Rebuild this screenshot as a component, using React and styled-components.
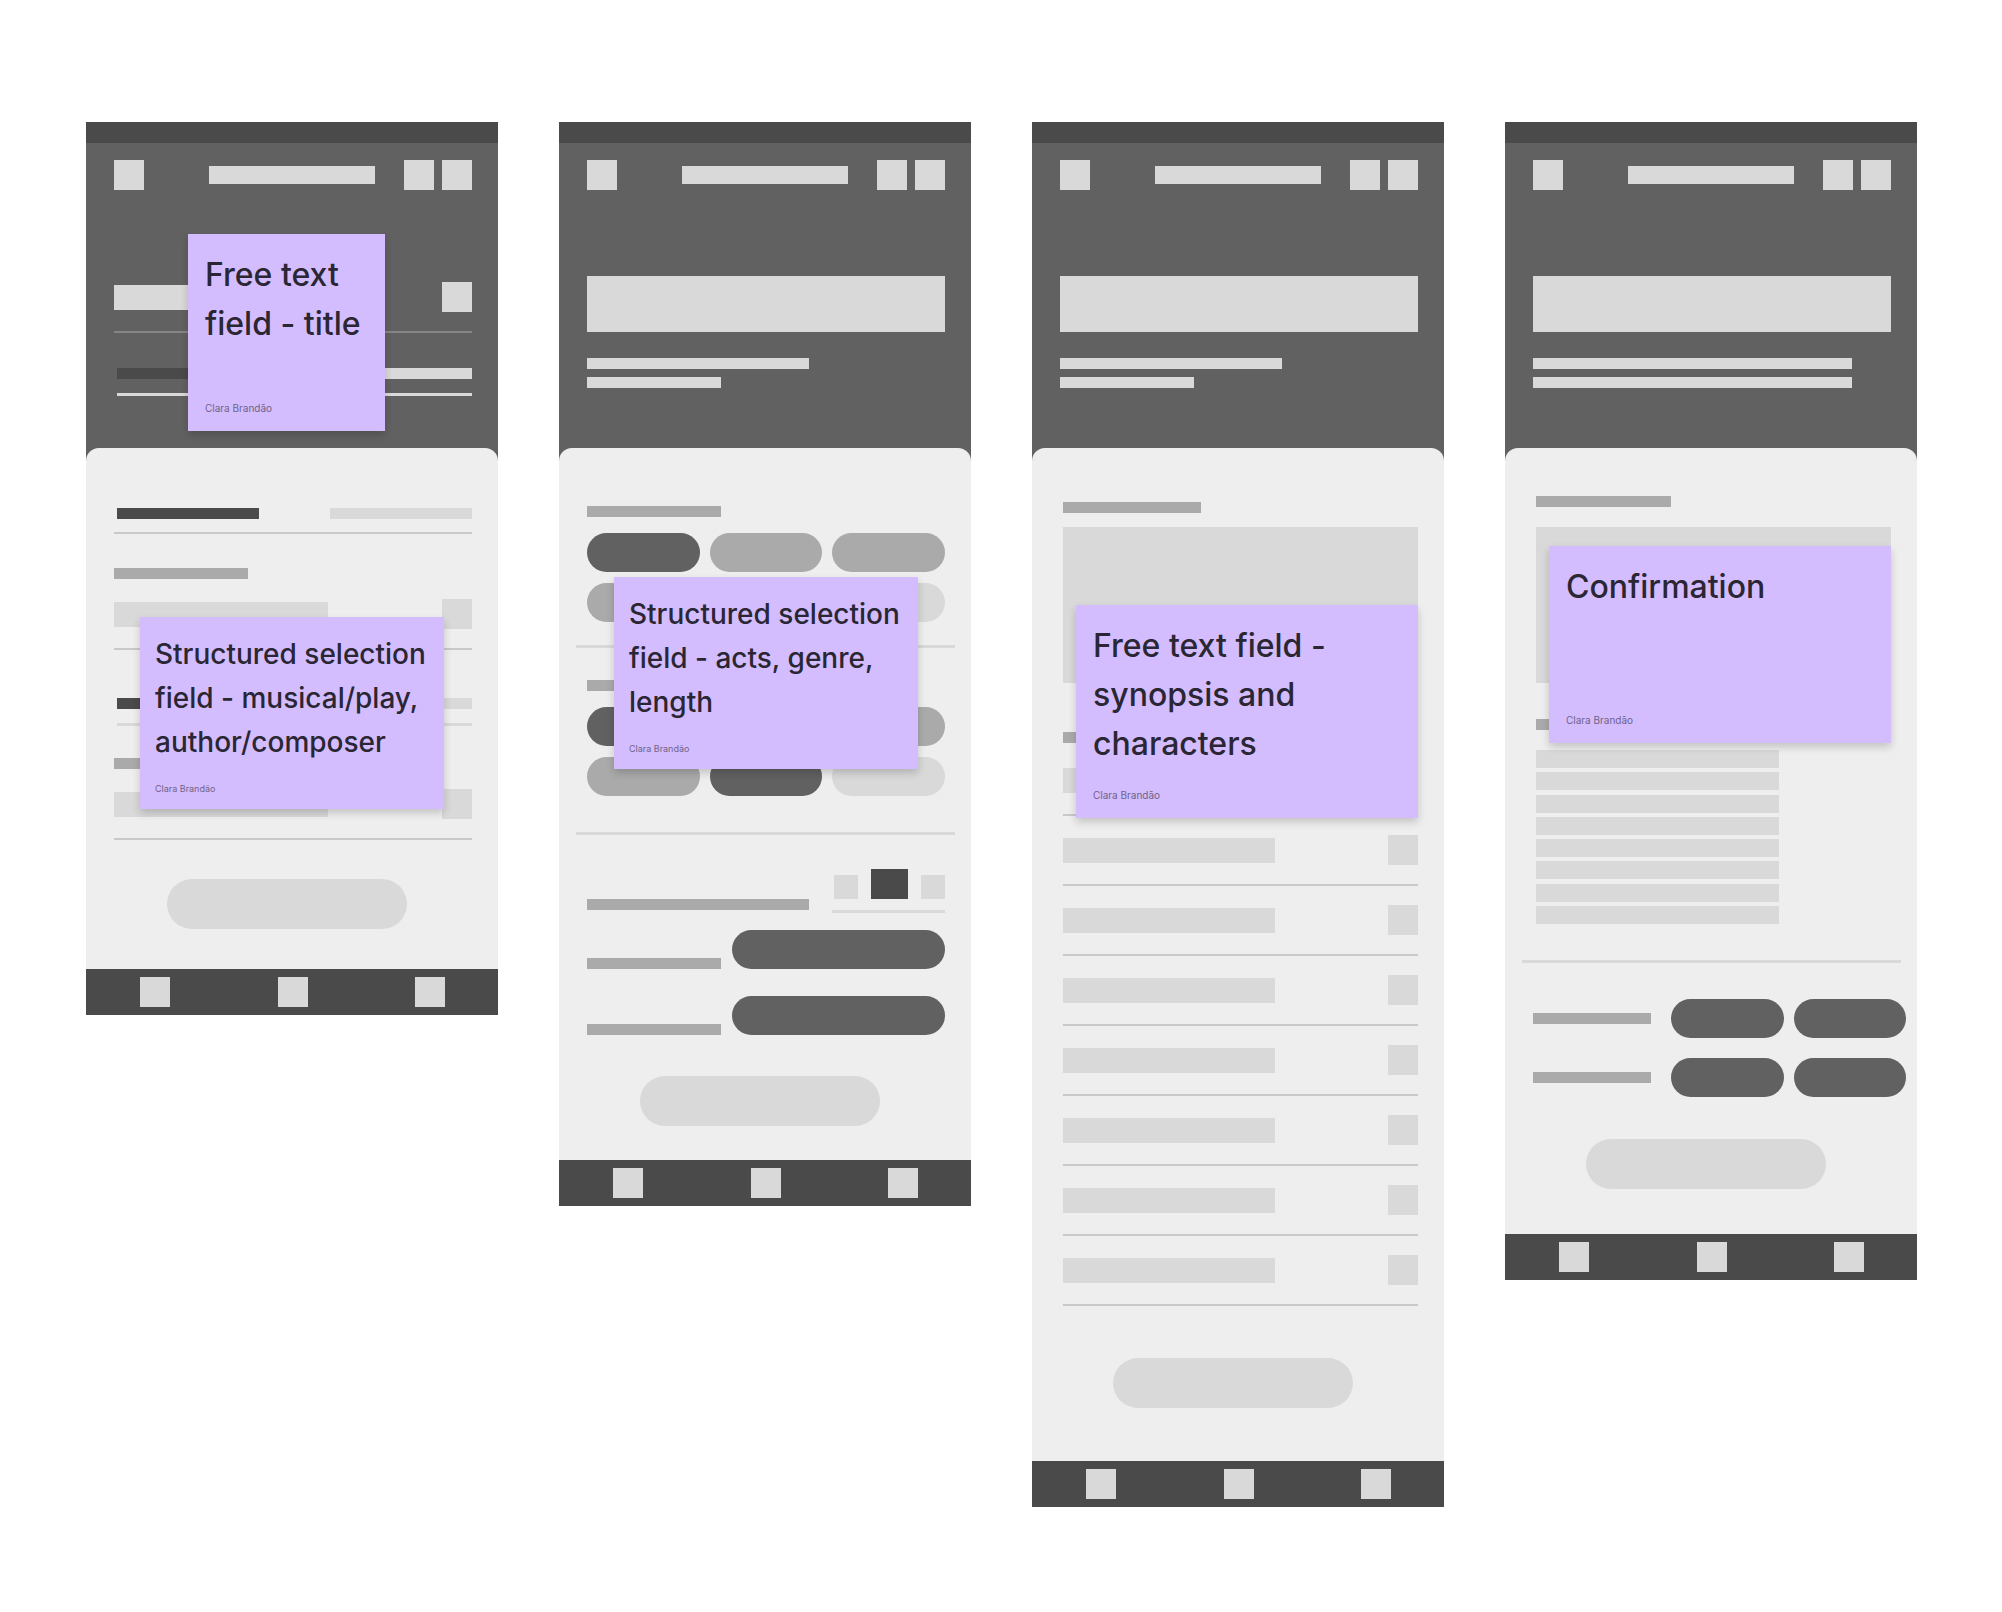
import styled, { createGlobalStyle } from "styled-components";

const colors = {
  ink: "#4a4a4a",
  header: "#616161",
  mid: "#aaaaaa",
  light: "#d9d9d9",
  sheet: "#eeeeee",
  rule: "#c9c9c9",
  headerRule: "#858585",
  note: "#d3bdff",
};

const characters = [1, 2, 3, 4, 5, 6, 7, 8];
const summaryLines = [1, 2, 3, 4, 5, 6, 7, 8];

const Note = ({ size, children, ...place }) => (
  <Sticky $large={size === "large"} {...place}>
    <NoteText $large={size === "large"}>{children}</NoteText>
    <NoteAuthor $large={size === "large"}>Clara Brandão</NoteAuthor>
  </Sticky>
);

const Field = ({ label, width = 214, top, line }) => (
  <FieldRow $top={top} $line={line}>
    <FieldInput aria-label={label} $width={width} />
    <SquareButton type="button" aria-label={`Edit ${label}`} />
  </FieldRow>
);

const TabPair = ({ top, inset, thick, header }) => (
  <Tabs $top={top} $inset={inset} $thick={thick}>
    <Bar $width={142} $color={colors.ink} />
    <Bar $width={142} $color={header ? colors.light : undefined} />
  </Tabs>
);

const PillRow = ({ tones, top, name }) => (
  <Pills $top={top}>
    {tones.map((tone, i) => (
      <Pill key={i} type="button" aria-label={`${name} ${i + 1}`} $color={colors[tone]} />
    ))}
  </Pills>
);

const Hero = ({ lines }) => (
  <HeroArea>
    <HeroTitle />
    {lines.map((width, i) => (
      <Bar key={i} $width={width} $top={i === 0 ? 26 : 8} />
    ))}
  </HeroArea>
);

const Phone = ({ header, notes, submit, children }) => (
  <Screen>
    <StatusBar />
    <TopBar>
      <SquareButton type="button" aria-label="Back" />
      <TopTitle />
      <TopActions>
        <SquareButton type="button" aria-label="Search" />
        <SquareButton type="button" aria-label="Menu" />
      </TopActions>
    </TopBar>
    {header}
    <Sheet>
      {children}
      <Actions $top={submit.top} $bottom={submit.bottom}>
        <SubmitButton type="button" aria-label="Continue" />
      </Actions>
    </Sheet>
    <BottomNav>
      <SquareButton type="button" aria-label="Home" />
      <SquareButton type="button" aria-label="Library" />
      <SquareButton type="button" aria-label="Profile" />
    </BottomNav>
    {notes}
  </Screen>
);

const TitleScreen = () => (
  <Phone
    submit={{ top: 39, bottom: 40 }}
    header={
      <TitleArea>
        <Field label="title" line={colors.headerRule} />
        <TabPair top={35} inset thick header />
      </TitleArea>
    }
    notes={
      <>
        <Note size="large" $left={102} $top={112} $width={197} $height={197}>
          Free text field - title
        </Note>
        <Note $left={54} $top={495} $width={304} $height={192}>
          Structured selection field - musical/play, author/composer
        </Note>
      </>
    }
  >
    <Section>
      <TabPair top={60} />
      <Bar $width={134} $color={colors.mid} $top={34} />
      <Field label="author" top={20} />
      <TabPair top={48} inset thick />
      <Bar $width={134} $color={colors.mid} $top={32} />
      <Field label="composer" top={20} />
    </Section>
  </Phone>
);

const SelectionScreen = () => (
  <Phone
    submit={{ top: 41, bottom: 34 }}
    header={<Hero lines={[222, 134]} />}
    notes={
      <Note $left={55} $top={455} $width={304} $height={192}>
        Structured selection field - acts, genre, length
      </Note>
    }
  >
    <Section>
      <Bar $width={134} $color={colors.mid} $top={58} />
      <PillRow name="Acts" top={16} tones={["header", "mid", "mid"]} />
      <PillRow name="More acts" top={11} tones={["mid", "mid", "light"]} />
    </Section>
    <Divider $top={23} />
    <Section>
      <Bar $width={134} $color={colors.mid} $top={32} />
      <PillRow name="Genre" top={16} tones={["header", "mid", "mid"]} />
      <PillRow name="More genres" top={11} tones={["mid", "header", "light"]} />
    </Section>
    <Divider $top={36} />
    <Section>
      <CounterRow $top={34}>
        <Bar $width={222} $color={colors.mid} />
        <Counter>
          <CounterStep type="button" aria-label="Fewer" />
          <CounterValue />
          <CounterStep type="button" aria-label="More" />
        </Counter>
      </CounterRow>
      <OptionRow $top={17}>
        <Bar $width={134} $color={colors.mid} />
        <Pill type="button" aria-label="Shortest" $color={colors.header} />
      </OptionRow>
      <OptionRow $top={27}>
        <Bar $width={134} $color={colors.mid} />
        <Pill type="button" aria-label="Longest" $color={colors.header} />
      </OptionRow>
    </Section>
  </Phone>
);

const SynopsisScreen = () => (
  <Phone
    submit={{ top: 52, bottom: 53 }}
    header={<Hero lines={[222, 134]} />}
    notes={
      <Note size="large" $left={44} $top={483} $width={342} $height={213}>
        Free text field - synopsis and characters
      </Note>
    }
  >
    <Section $left={31}>
      <Bar $width={138} $color={colors.mid} $top={54} />
      <TextBox aria-label="Synopsis" $top={14} />
      <Bar $width={138} $color={colors.mid} $top={49} />
      {characters.map((n) => (
        <Field key={n} label={`character ${n}`} width={212} top={n === 1 ? 22 : 19} />
      ))}
    </Section>
  </Phone>
);

const ConfirmationScreen = () => (
  <Phone
    submit={{ top: 42, bottom: 45 }}
    header={<Hero lines={[319, 319]} />}
    notes={
      <Note size="large" $left={44} $top={424} $width={342} $height={197}>
        Confirmation
      </Note>
    }
  >
    <Section $left={31}>
      <Bar $width={135} $color={colors.mid} $top={48} />
      <TextBox aria-label="Summary" $top={20} />
      <Bar $width={135} $color={colors.mid} $top={36} />
      <Summary>
        {summaryLines.map((n) => (
          <SummaryLine key={n} />
        ))}
      </Summary>
    </Section>
    <Divider $top={36} />
    <Section $right={11}>
      {[36, 20].map((top, i) => (
        <ConfirmRow key={i} $top={top}>
          <Bar $width={118} $color={colors.mid} />
          <PillRow name={`Choice ${i + 1}`} tones={["header", "header"]} />
        </ConfirmRow>
      ))}
    </Section>
  </Phone>
);

const App = () => (
  <>
    <GlobalStyle />
    <Board>
      <TitleScreen />
      <SelectionScreen />
      <SynopsisScreen />
      <ConfirmationScreen />
    </Board>
  </>
);
export default App;

const GlobalStyle = createGlobalStyle`
  *, *::before, *::after {
    box-sizing: border-box;
  }
  body {
    margin: 0;
    background: #fff;
    font-family: Inter, "Liberation Sans", sans-serif;
  }
  button, input, textarea {
    margin: 0;
    padding: 0;
    border: 0;
    border-radius: 0;
    font: inherit;
  }
`;
const Board = styled.main`
  display: grid;
  grid-template-columns: repeat(4, minmax(0, 1fr));
  align-items: start;
  gap: 61px;
  padding: 122px 85px 105px 86px;
`;
const Screen = styled.section`
  position: relative;
  display: flex;
  flex-direction: column;
  background: ${colors.header};
`;
const StatusBar = styled.div`
  height: 21px;
  background: ${colors.ink};
`;
const TopBar = styled.header`
  display: flex;
  align-items: center;
  padding: 17px 26px 0 28px;
`;
const TopTitle = styled.div`
  width: 166px;
  height: 18px;
  margin: 0 29px 0 auto;
  background: ${colors.light};
`;
const TopActions = styled.div`
  display: flex;
  gap: 8px;
`;
const SquareButton = styled.button`
  flex: none;
  width: 30px;
  height: 30px;
  background: ${colors.light};
`;
const TitleArea = styled.div`
  padding: 92px 26px 52px 28px;
`;
const HeroArea = styled.div`
  padding: 86px 26px 60px 28px;
`;
const HeroTitle = styled.div`
  height: 56px;
  background: ${colors.light};
`;
const Sheet = styled.div`
  background: ${colors.sheet};
  border-radius: 13px 13px 0 0;
`;
const Section = styled.div`
  display: flex;
  flex-direction: column;
  padding: 0 ${({ $right = 26 }) => $right}px 0 ${({ $left = 28 }) => $left}px;
`;
const Bar = styled.div`
  flex: none;
  width: ${({ $width }) => $width}px;
  max-width: 100%;
  height: 11px;
  margin-top: ${({ $top = 0 }) => $top}px;
  background: ${({ $color = colors.light }) => $color};
`;
const Tabs = styled.div`
  display: flex;
  justify-content: space-between;
  margin-top: ${({ $top }) => $top}px;
  margin-left: ${({ $inset }) => ($inset ? 3 : 0)}px;
  padding-left: ${({ $inset }) => ($inset ? 0 : 3)}px;
  padding-bottom: ${({ $thick }) => ($thick ? 14 : 13)}px;
  border-bottom: ${({ $thick }) =>
    $thick ? `3px solid ${colors.light}` : `2px solid ${colors.rule}`};
`;
const FieldRow = styled.div`
  display: flex;
  align-items: center;
  justify-content: space-between;
  margin-top: ${({ $top = 0 }) => $top}px;
  padding-bottom: 19px;
  border-bottom: 2px solid ${({ $line = colors.rule }) => $line};
`;
const FieldInput = styled.input`
  width: ${({ $width }) => $width}px;
  min-width: 0;
  height: 25px;
  background: ${colors.light};
`;
const TextBox = styled.textarea`
  display: block;
  width: 100%;
  height: 156px;
  margin-top: ${({ $top }) => $top}px;
  background: ${colors.light};
  resize: none;
`;
const Pills = styled.div`
  display: flex;
  flex: 1;
  gap: 10px;
  margin-top: ${({ $top = 0 }) => $top}px;
`;
const Pill = styled.button`
  flex: 1;
  min-width: 0;
  height: 39px;
  border-radius: 20px;
  background: ${({ $color }) => $color};
`;
const Divider = styled.hr`
  height: 3px;
  margin: ${({ $top }) => $top}px 16px 0 17px;
  border: 0;
  background: ${colors.light};
`;
const CounterRow = styled.div`
  display: flex;
  justify-content: space-between;
  align-items: flex-end;
  margin-top: ${({ $top }) => $top}px;

  > ${Bar} {
    margin-bottom: 3px;
  }
`;
const Counter = styled.div`
  display: flex;
  justify-content: space-between;
  align-items: flex-end;
  width: 113px;
  padding: 0 0 11px 2px;
  border-bottom: 3px solid ${colors.light};
`;
const CounterStep = styled.button`
  width: 24px;
  height: 24px;
  background: ${colors.light};
`;
const CounterValue = styled.div`
  width: 37px;
  height: 30px;
  background: ${colors.ink};
`;
const OptionRow = styled.div`
  display: flex;
  align-items: flex-end;
  gap: 11px;
  margin-top: ${({ $top }) => $top}px;
`;
const Summary = styled.div`
  display: flex;
  flex-direction: column;
  justify-content: space-between;
  width: 243px;
  height: 174px;
  margin-top: 20px;
`;
const SummaryLine = styled.div`
  height: 18px;
  background: ${colors.light};
`;
const ConfirmRow = styled.div`
  display: flex;
  align-items: center;
  gap: 20px;
  margin-top: ${({ $top }) => $top}px;
`;
const Actions = styled.div`
  display: flex;
  justify-content: center;
  padding: ${({ $top }) => $top}px 10px ${({ $bottom }) => $bottom}px 0;
`;
const SubmitButton = styled.button`
  width: 240px;
  height: 50px;
  border-radius: 25px;
  background: ${colors.light};
`;
const BottomNav = styled.nav`
  display: flex;
  justify-content: space-between;
  padding: 8px 53px 8px 54px;
  background: ${colors.ink};
`;
// sticky notes are pinned on top of the screens
const Sticky = styled.aside`
  position: absolute;
  left: ${({ $left }) => $left}px;
  top: ${({ $top }) => $top}px;
  display: flex;
  flex-direction: column;
  justify-content: space-between;
  width: ${({ $width }) => $width}px;
  min-height: ${({ $height }) => $height}px;
  padding: ${({ $large }) => ($large ? "16px 16px 17px 17px" : "15px 10px 14px 15px")};
  background: ${colors.note};
  box-shadow: 0 4px 8px rgba(0, 0, 0, 0.18);
`;
const NoteText = styled.p`
  margin: 0;
  color: #2a2633;
  font-size: ${({ $large }) => ($large ? 32 : 28)}px;
  font-weight: 500;
  line-height: ${({ $large }) => ($large ? 49 : 44)}px;
`;
const NoteAuthor = styled.span`
  color: #6f6389;
  font-size: ${({ $large }) => ($large ? 10 : 9)}px;
  line-height: 12px;
`;
